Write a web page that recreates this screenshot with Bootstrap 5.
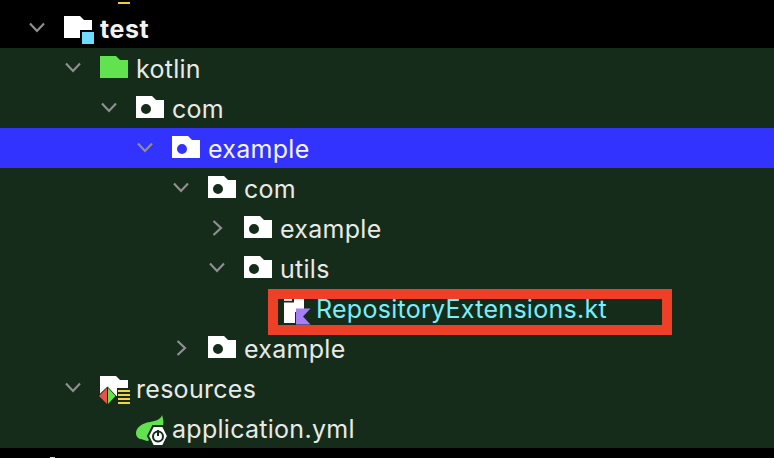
<!DOCTYPE html>
<html lang="en">

<head>
    <meta charset="UTF-8">
    <meta name="viewport" content="width=device-width, initial-scale=1">
    <title>Project tree</title>
    <link href="https://cdn.jsdelivr.net/npm/bootstrap@5.3.3/dist/css/bootstrap.min.css" rel="stylesheet">
    <style>
        body { background: #000; overflow: hidden; }
        .tree-wrap { position: relative; width: 774px; height: 458px; padding-top: 8px; font-family: Inter, "Liberation Sans", sans-serif; }
        .tree-tick { position: absolute; left: 118px; top: 2px; width: 12px; height: 2px; background: #f5c842; }
        .tree-crumb { position: absolute; left: 50px; top: 457px; width: 5px; height: 1px; background: #cfcfcf; }
        .tree-row { height: 40px; background: #162c1a; color: #e8eae8; font-size: 25px; letter-spacing: .28px; }
        .tree-row span { margin-top: 4px; }
        .tree-row.is-root { background: #000; font-weight: 700; color: #f2f2f2; letter-spacing: .6px; }
        .tree-row.is-active { background: #3333ff; color: #f4f4ff; }
        .tree-row.is-file { color: #7aeefb; }
        .tree-chev { width: 20px; margin-right: 17px; flex: none; }
        .tree-icon { width: 36px; height: 32px; flex: none; overflow: visible; }
        .lvl-0 { padding-left: 27px; }
        .lvl-1 { padding-left: 63px; }
        .lvl-2 { padding-left: 99px; }
        .lvl-3 { padding-left: 135px; }
        .lvl-4 { padding-left: 171px; }
        .lvl-5 { padding-left: 207px; }
        .lvl-6 { padding-left: 243px; }
        .red-box { position: absolute; left: 268px; top: 289px; width: 404px; height: 46px; border: 10px solid #ee4026; }
    </style>
</head>

<body>
    <svg width="0" height="0" class="position-absolute">
        <defs>
            <symbol id="chev-down" viewBox="0 0 20 32"><path d="M3 11.5l7 7.5 7-7.5" fill="none" stroke="#8f8f8f" stroke-width="2.2"/></symbol>
            <symbol id="chev-right" viewBox="0 0 20 32"><path d="M6.5 9l7.5 7-7.5 7" fill="none" stroke="#8f8f8f" stroke-width="2.2"/></symbol>
            <symbol id="pkg" viewBox="0 0 36 32"><path fill="#fff" fill-rule="evenodd" d="M0 4h16l4 4h8v18H0zM10 12a5 5 0 1 0 0 10 5 5 0 0 0 0-10z"/></symbol>
        </defs>
    </svg>
    <div class="tree-wrap">
        <div class="tree-tick"></div>

        <div class="tree-row is-root d-flex align-items-center lvl-0">
            <svg class="tree-chev" height="32"><use href="#chev-down"/></svg>
            <svg class="tree-icon" viewBox="0 0 36 32"><path fill="#fff" d="M0 4h16l4 4h8v10H16v8H0z"/><rect x="18" y="20" width="12" height="12" fill="#6fdcff"/></svg>
            <span>test</span>
        </div>
        <div class="tree-row d-flex align-items-center lvl-1">
            <svg class="tree-chev" height="32"><use href="#chev-down"/></svg>
            <svg class="tree-icon" viewBox="0 0 36 32"><path fill="#62e24f" d="M0 4h16l4 4h8v18H0z"/></svg>
            <span>kotlin</span>
        </div>
        <div class="tree-row d-flex align-items-center lvl-2">
            <svg class="tree-chev" height="32"><use href="#chev-down"/></svg>
            <svg class="tree-icon"><use href="#pkg"/></svg>
            <span>com</span>
        </div>
        <div class="tree-row is-active d-flex align-items-center lvl-3">
            <svg class="tree-chev" height="32"><use href="#chev-down"/></svg>
            <svg class="tree-icon"><use href="#pkg"/></svg>
            <span>example</span>
        </div>
        <div class="tree-row d-flex align-items-center lvl-4">
            <svg class="tree-chev" height="32"><use href="#chev-down"/></svg>
            <svg class="tree-icon"><use href="#pkg"/></svg>
            <span>com</span>
        </div>
        <div class="tree-row d-flex align-items-center lvl-5">
            <svg class="tree-chev" height="32"><use href="#chev-right"/></svg>
            <svg class="tree-icon"><use href="#pkg"/></svg>
            <span>example</span>
        </div>
        <div class="tree-row d-flex align-items-center lvl-5">
            <svg class="tree-chev" height="32"><use href="#chev-down"/></svg>
            <svg class="tree-icon"><use href="#pkg"/></svg>
            <span>utils</span>
        </div>
        <div class="tree-row is-file d-flex align-items-center lvl-6">
            <svg class="tree-chev" height="32"></svg>
            <svg class="tree-icon" viewBox="0 0 36 32">
                <path fill="#fff" d="M4 7h8v3.5h2V7h10v13H15v11H4z"/>
                <path fill="#162c1a" d="M4 8.8h8v1.7H4z"/>
                <path fill="#a67ff5" d="M16 16.5h14.5l-7.5 8 7.5 8H16z"/>
            </svg>
            <span>RepositoryExtensions.kt</span>
        </div>
        <div class="tree-row d-flex align-items-center lvl-4">
            <svg class="tree-chev" height="32"><use href="#chev-right"/></svg>
            <svg class="tree-icon"><use href="#pkg"/></svg>
            <span>example</span>
        </div>
        <div class="tree-row d-flex align-items-center lvl-1">
            <svg class="tree-chev" height="32"><use href="#chev-down"/></svg>
            <svg class="tree-icon" viewBox="0 0 36 32">
                <path fill="#fff" d="M0 4h16l4 4h8v8H17v8H0z"/>
                <path fill="#162c1a" d="M7.5 14.5L-2.5 24l10 9.5 9-9.5z"/>
                <path fill="#e8504a" d="M7 16l-8 8 8 8z"/>
                <path fill="#62e24f" d="M8 16l7.5 8-7.5 8z"/>
                <path fill="#f5d142" d="M18 18h12v2H18zM18 22h12v2H18zM18 26h12v2H18zM18 30h12v2H18z"/>
            </svg>
            <span>resources</span>
        </div>
        <div class="tree-row d-flex align-items-center lvl-2">
            <svg class="tree-chev" height="32"></svg>
            <svg class="tree-icon" viewBox="0 0 36 32">
                <path fill="#62e24f" d="M26 3C25 7 20 9 14 10 6 11 0 16 0 21c0 4 3 6 5 6l6 2 3-1 13-14c1-4 0-8-1-11z"/>
                <path fill="#fff" stroke="#162c1a" stroke-width="2" d="M17 14h10l5 10-5 10H17l-5-10z"/>
                <circle cx="22" cy="24.5" r="5" fill="none" stroke="#162c1a" stroke-width="2"/>
                <path stroke="#162c1a" stroke-width="2" d="M22 18v6"/>
            </svg>
            <span>application.yml</span>
        </div>
        <div class="red-box"></div>
        <div class="tree-crumb"></div>
    </div>

    <script src="https://cdn.jsdelivr.net/npm/bootstrap@5.3.3/dist/js/bootstrap.bundle.min.js"></script>
</body>

</html>
